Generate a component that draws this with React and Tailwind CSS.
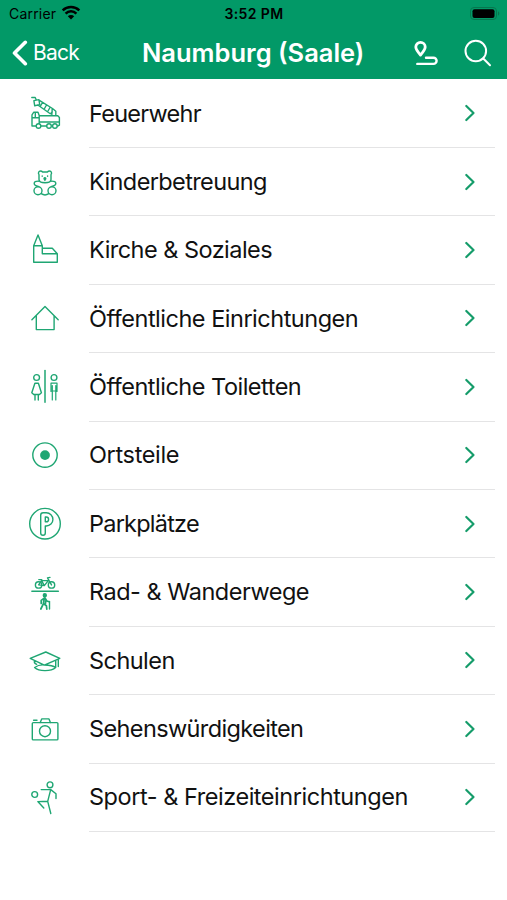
const FireTruck = () => (
  <>
    <path d="M6.8 4.5h3.4l1 2.200M8.900 7.600l5-1 .8 5-5 1.200zM14 7.200l13.500 8.300 3.300 2.800v4.200M12.800 12l12.500 8.800 2-1.800M17.500 9.500l-2 3.500M21.500 12l-2 3.500M25 14.500l-2 3.500M27.200 15.800l-.4 6.500M7 33V21.800l1.800-2.600H13l1.200 3.400v8M7 24.800h6.500M10.300 19.500v5M14.300 22.800h18.500l1.600 1.600v7.800l-1.700.9M14.300 29h20M16 33h5.500M7 33h4" />
    <circle cx="13.500" cy="33" r="2.300" />
    <circle cx="24" cy="33" r="2.300" />
    <circle cx="29.900" cy="33" r="2.300" />
  </>
);

const Bear = () => (
  <>
    <path d="M14 12.600c-1.200-1.600-.3-3.600 1.500-3.600 1 0 1.700.5 2.100 1h4.800c.4-.5 1.100-1 2.100-1 1.800 0 2.700 2 1.500 3.600v5c0 2-2.300 3.200-6 3.200s-6-1.200-6-3.200z" />
    <path d="M14 19.200c-3.600-.2-4.800.7-4.800 2.300 0 1.700 1.800 2.500 4.200 2.900M26 19.200c3.600-.2 4.800.7 4.800 2.300 0 1.700-1.800 2.500-4.200 2.900M16.200 31.700c2.200 1.500 5.400 1.500 7.600 0" />
    <circle cx="13" cy="28.800" r="4" />
    <circle cx="27" cy="28.800" r="4" />
    <path d="M19.900 17v1.500M17.200 14v.2M22.600 14v.2" />
    <circle cx="19.900" cy="16.500" r=".9" fill="currentColor" />
  </>
);

const Church = () => (
  <path d="M8.700 15.700 13 5l4.300 10.700zM8.700 15.700v16.600h23.600v-8.600l-5-5.400h-10M17.300 15.700v8h15" />
);

const House = () => (
  <path d="M6.900 21.700 20 8.600l13.200 13.100M11.300 17.500v14.100h17.800V17.500" />
);

const Restroom = () => (
  <>
    <path d="M20 3.500v31.800" strokeWidth="1.500" />
    <circle cx="11.600" cy="10.500" r="2.900" />
    <path d="M9.900 16.200h3.500l3 9.600-1.900 1.700H8.700l-1.900-1.700zM10 27.500v5.500M13.300 27.500v5.500" />
    <circle cx="29" cy="10.500" r="2.900" />
    <path d="M26 24.500v-8.300h6v8.300M27.300 18.500V33M30.800 18.500V33M27.300 24h3.500" strokeWidth="1.200" />
  </>
);

const Target = () => (
  <>
    <circle cx="20" cy="20.100" r="12.200" />
    <circle cx="20" cy="20.100" r="4.900" fill="currentColor" stroke="none" />
  </>
);

const Parking = () => (
  <>
    <circle cx="20" cy="19.700" r="15.300" />
    <path d="M15.700 11.200a2.400 2.400 0 0 1 2.400-2.400h3.200a6.600 6.600 0 0 1 0 13.200h-1v6.900a2.300 2.300 0 0 1-4.600 0z" />
    <path d="M20.300 13h.9a2.400 2.400 0 0 1 0 4.800h-.9z" />
  </>
);

const Trails = () => (
  <>
    <path d="M6.900 19.300h26.400" strokeWidth="1.600" />
    <circle cx="13.600" cy="12.900" r="3.200" />
    <circle cx="26.500" cy="12.900" r="3.200" />
    <path d="M13.600 12.900l3-4.300h6.700l-4 5zM13.800 7.600h3M16.600 8.600l2.700 5M22.500 5.900l4 7M22.500 5.900l2.500-.5" />
    <circle cx="19.800" cy="23.300" r="1.500" fill="currentColor" />
    <path d="M19.500 26l-3.300 2.400v3M20 26l1.800 3 2.400.8M19.300 26.500l-.9 5 3 2.200.4 3.500M18.300 32l-2.500 5M20.800 28.500l-.3 3" strokeWidth="1.700" />
    <path d="M24.500 29.500v7.500" />
  </>
);

const Cap = () => (
  <path d="M5.200 18.300 20.800 12l14 6.300-15.500 6.800zM9.500 20.700c-.6 1.800.6 3 2.200 3.600M9.600 27.500c3.500-2.500 7-2.800 9.700-2.500 4 .1 8.800.5 11.400 2.500-4.500 4-16.600 4.300-21.100 0zM30.700 20.500v7M33.300 19v7.500" />
);

const Photo = () => (
  <>
    <rect x="7.300" y="13.600" width="25.600" height="17.300" rx="1" />
    <circle cx="20" cy="22.200" r="5.500" />
    <path d="M15.200 13.600l1.500-3.700h7.300l1.400 3.700M8.600 11.200h3.400" />
  </>
);

const Kicker = () => (
  <>
    <circle cx="25" cy="7.800" r="2.900" />
    <circle cx="9.700" cy="17.500" r="2.900" />
    <path d="M16.200 12.600h9.500l5.300 4.200v4.700M25.700 12.600l-3 11.700 3.100 12.200M22.700 24.300l-9.900.3 6 6.400" />
  </>
);

const categories = [
  { label: "Feuerwehr", Icon: FireTruck, tracking: "tracking-[-0.75px]" },
  { label: "Kinderbetreuung", Icon: Bear, tracking: "tracking-[-0.62px]" },
  { label: "Kirche & Soziales", Icon: Church, tracking: "tracking-[-0.53px]" },
  { label: "Öffentliche Einrichtungen", Icon: House, tracking: "tracking-[-0.49px]" },
  { label: "Öffentliche Toiletten", Icon: Restroom, tracking: "tracking-[-0.5px]" },
  { label: "Ortsteile", Icon: Target, tracking: "tracking-[-0.35px]" },
  { label: "Parkplätze", Icon: Parking, tracking: "tracking-[-0.78px]" },
  { label: "Rad- & Wanderwege", Icon: Trails, tracking: "tracking-[-0.5px]" },
  { label: "Schulen", Icon: Cap, tracking: "tracking-[-0.55px]" },
  { label: "Sehenswürdigkeiten", Icon: Photo, tracking: "tracking-[-0.62px]" },
  { label: "Sport- & Freizeiteinrichtungen", Icon: Kicker, tracking: "tracking-[-0.46px]" },
];

const StatusBar = () => (
  <div className="grid h-[27px] grid-cols-3 items-center pl-[9px] pr-[6px] text-black">
    <div className="flex items-center gap-[5px]">
      <span className="text-[14px] leading-none tracking-[0.2px]">Carrier</span>
      <svg viewBox="0 0 20 15" className="-mt-[2px] h-[15px] w-5" fill="none" stroke="currentColor" strokeWidth="2.500" aria-hidden="true">
        <path d="M1.700 5.400a12 12 0 0 1 16.600 0M4.600 8.600a7.600 7.600 0 0 1 10.800 0" />
        <path d="M10 14.400l-3.200-3.200a4.600 4.600 0 0 1 6.400 0z" fill="currentColor" stroke="none" />
      </svg>
    </div>
    <span className="-ml-[2px] text-center text-[14px] font-semibold leading-none tracking-[0.4px]">3:52 PM</span>
    <svg viewBox="0 0 32 15" className="h-[15px] w-8 justify-self-end" aria-hidden="true">
      <rect x="1.500" y="1.500" width="26" height="12" rx="3.500" fill="none" stroke="#06774e" />
      <rect x="3.500" y="3.300" width="22" height="8.600" rx="2" fill="#000" />
      <path d="M29 5.300c1.800.7 1.800 3.700 0 4.400z" fill="#06774e" />
    </svg>
  </div>
);

const NavBar = () => (
  <div className="flex h-[52px] items-center pl-[12px] pr-[15px] text-white">
    <button className="flex w-[130px] items-center gap-[5px]">
      <svg viewBox="0 0 16 26" className="h-[26px] w-4" fill="none" stroke="currentColor" strokeWidth="3.600" strokeLinecap="round" strokeLinejoin="round" aria-hidden="true">
        <path d="M13.300 2.300 2.500 13l10.800 10.700" />
      </svg>
      <span className="-mt-px whitespace-nowrap text-[21px] leading-none tracking-[-0.75px]">Back</span>
    </button>
    <h1 className="flex-1 whitespace-nowrap text-[25.500px] font-semibold leading-none">Naumburg (Saale)</h1>
    <div className="flex items-center gap-[25px]">
      <svg viewBox="0 0 26 28" className="h-7 w-[26px]" fill="none" stroke="currentColor" strokeWidth="2.400" strokeLinecap="round" strokeLinejoin="round" aria-hidden="true">
        <path d="M7.500 16.100C4.200 12.300 2.800 10.200 2.800 8.100a4.700 4.700 0 0 1 9.400 0c0 2.100-1.400 4.200-4.700 8z" strokeWidth="2.800" />
        <path d="M13 18.700h7.500a3 3 0 0 1 0 6.200H4.300" />
      </svg>
      <svg viewBox="0 0 28 28" className="size-7" fill="none" stroke="currentColor" strokeWidth="2" strokeLinecap="round" aria-hidden="true">
        <circle cx="11.800" cy="12" r="10.300" />
        <path d="M19.300 19.500l6.700 6.700" />
      </svg>
    </div>
  </div>
);

const CategoryRow = ({ label, Icon, tracking }) => (
  <li className="flex h-[68.400px] items-center pl-[25px] pr-3">
    <svg viewBox="0 0 40 40" className="-mt-px size-10 shrink-0 text-[#1fa673]" fill="none" stroke="currentColor" strokeWidth="1.400" strokeLinecap="round" strokeLinejoin="round" aria-hidden="true">
      <Icon />
    </svg>
    <div className="ml-6 flex h-full flex-1 items-center justify-between border-b border-[#e4e4e5] pr-[19px]">
      <span className={`whitespace-nowrap text-[23.500px] leading-none text-[#111] ${tracking}`}>{label}</span>
      <svg viewBox="0 0 12 18" className="h-[18px] w-3 text-[#159c6a]" fill="none" stroke="currentColor" strokeWidth="2.200" strokeLinecap="round" strokeLinejoin="round" aria-hidden="true">
        <path d="M2.300 2 9.500 9l-7.200 7" />
      </svg>
    </div>
  </li>
);

const App = () => (
  <main className="h-[900px] w-full overflow-hidden bg-white font-['Inter',sans-serif]">
    <header className="h-[79px] bg-[#029967]">
      <StatusBar />
      <NavBar />
    </header>
    <ul className="pt-[0.6px]">
      {categories.map((category) => (
        <CategoryRow key={category.label} {...category} />
      ))}
    </ul>
  </main>
);

export default App;
